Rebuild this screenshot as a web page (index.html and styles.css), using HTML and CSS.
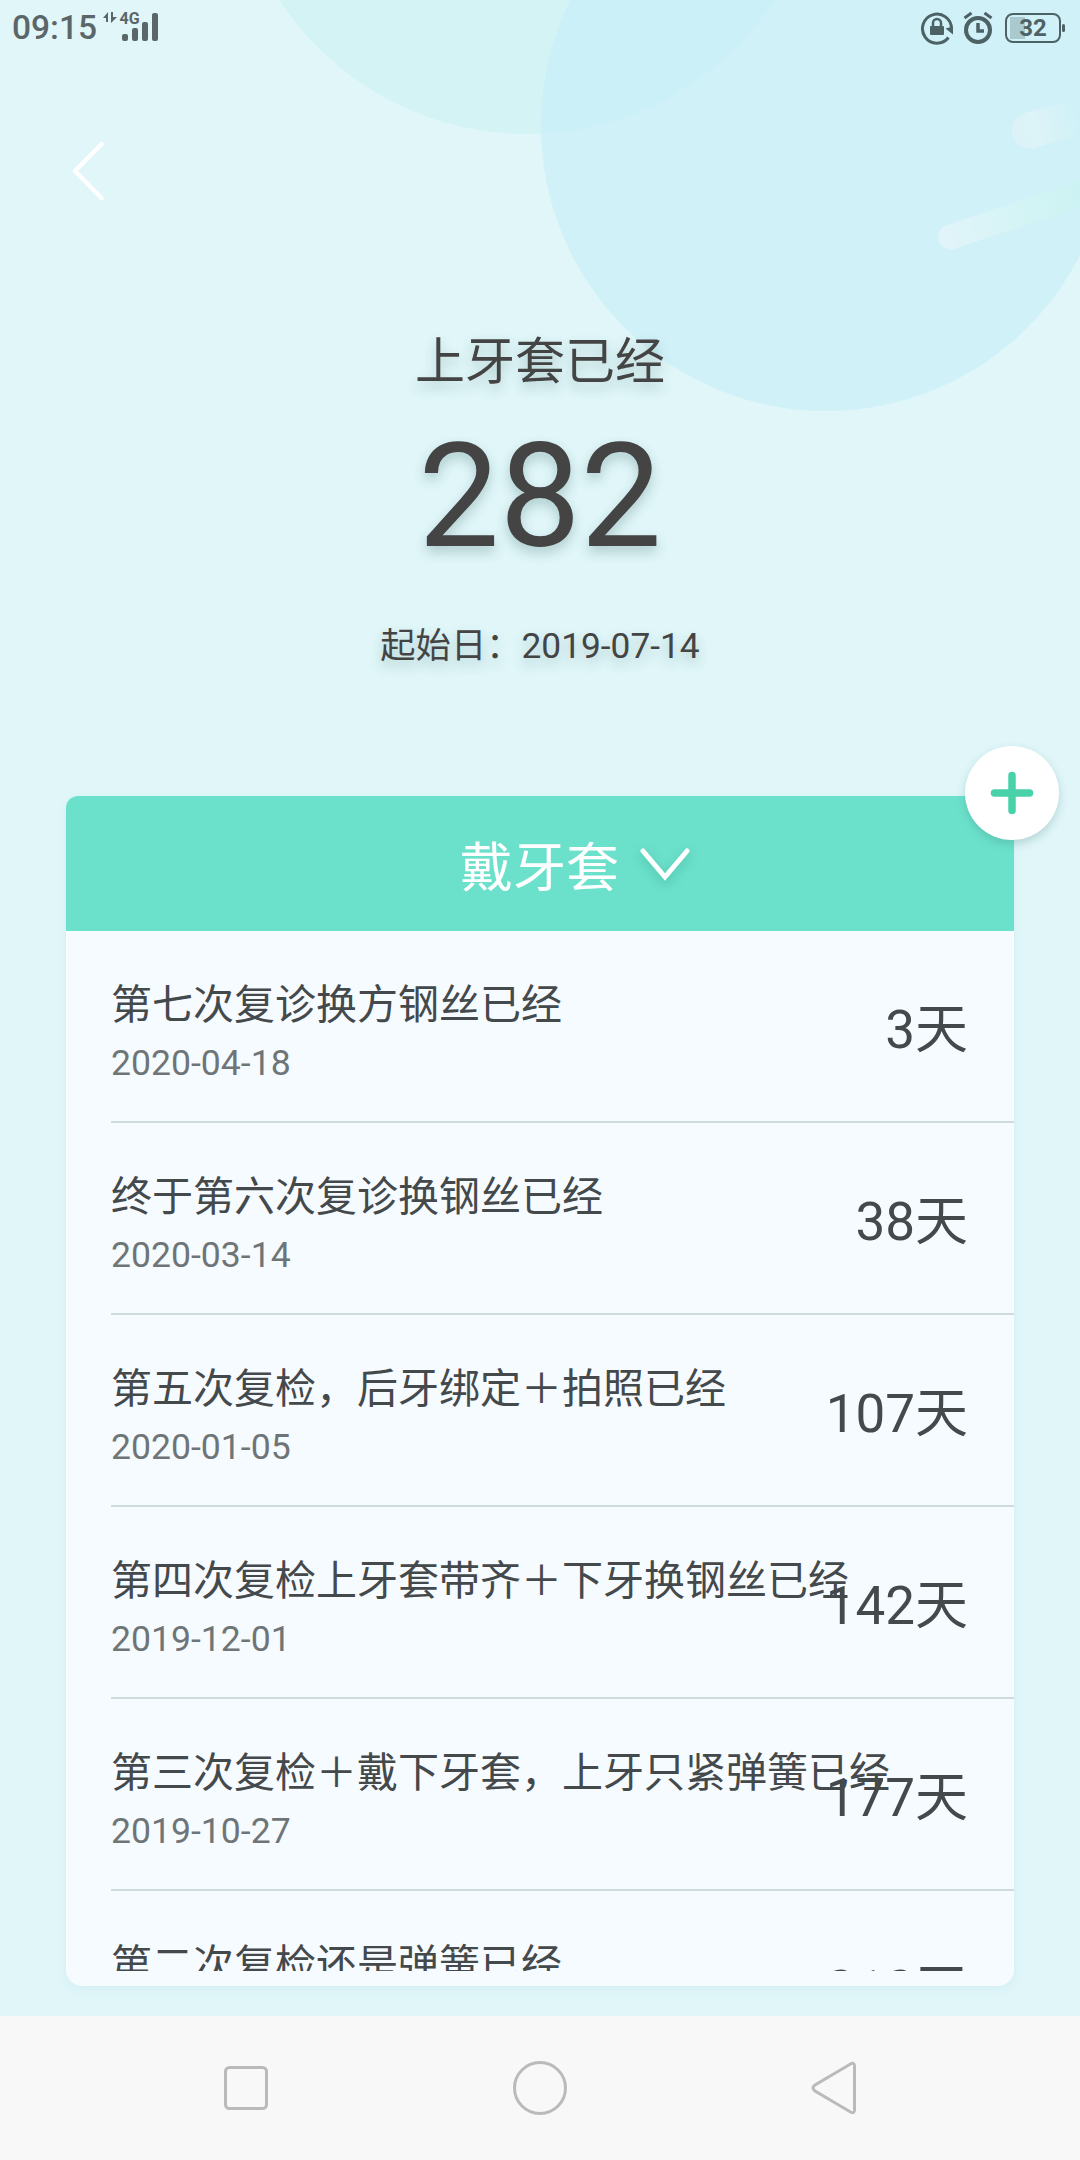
FILE: index.html
```html
<!DOCTYPE html>
<html lang="zh-CN">
<head>
    <meta charset="UTF-8">
    <meta name="viewport" content="width=device-width, initial-scale=1.0">
    <title>戴牙套</title>
    <link rel="stylesheet" href="styles.css">
</head>
<body>
    <svg class="backdrop" viewBox="0 0 1080 450">
        <defs>
            <linearGradient id="streak" x1="0" x2="1" y1="0" y2="0">
                <stop offset="0" stop-color="#e2f4fa"/>
                <stop offset="0.5" stop-color="#d3f4f4"/>
                <stop offset="1" stop-color="#c8f1f2"/>
            </linearGradient>
            <linearGradient id="streak-short" x1="0" x2="1" y1="0" y2="0">
                <stop offset="0" stop-color="#dcf2f8"/>
                <stop offset="0.4" stop-color="#dcf3f7"/>
                <stop offset="1" stop-color="#d0f2f7"/>
            </linearGradient>
        </defs>
        <circle cx="527" cy="-162" r="296" fill="#d4f3f5"/>
        <circle cx="826" cy="126" r="285" fill="#c4eef8" fill-opacity="0.56"/>
        <rect x="0" y="0" width="190" height="25" rx="12.5" fill="url(#streak)" transform="translate(935 229) rotate(-18.5)"/>
        <rect x="0" y="0" width="66" height="36" rx="17" fill="url(#streak-short)" transform="translate(1008 118) rotate(-16)"/>
    </svg>

    <header class="status-bar">
        <div class="status-left">
            <span class="clock">09:15</span>
            <svg class="signal" width="56" height="32" viewBox="0 0 56 32">
                <path d="M0 7l5-6v10h-2V7zM8 1h2v5h4l-6 6z" fill="#5b6668"/>
                <text class="network" x="16.500" y="13">4G</text>
                <rect x="19" y="23" width="6" height="7" rx="2" fill="#5b6668"/>
                <rect x="29" y="17" width="6" height="13" rx="2" fill="#5b6668"/>
                <rect x="39" y="11" width="6" height="19" rx="2" fill="#5b6668"/>
                <rect x="49" y="2" width="6" height="28" rx="2" fill="#5b6668"/>
            </svg>
        </div>
        <div class="status-right">
            <svg width="34" height="34" viewBox="0 0 34 34" fill="none" stroke="#4d6265" stroke-width="3">
                <path d="M28.500 26.500a14.500 14.500 0 1 1 3-9"/>
                <path d="M25.500 17.500l7.500-2v8z" fill="#4d6265" stroke="none"/>
                <rect x="10" y="15" width="14" height="9" rx="1" fill="#4d6265" stroke="none"/>
                <path d="M13 15v-3a4 4 0 0 1 8 0v3" stroke-width="2.500"/>
            </svg>
            <svg width="30" height="34" viewBox="0 0 30 34" fill="none" stroke="#4d6265" stroke-width="4">
                <circle cx="15" cy="19" r="12"/>
                <path d="M15 12v8h6" stroke-width="3.500"/>
                <path d="M1.500 7l7-5M28.500 7l-7-5" stroke-width="3"/>
            </svg>
            <div class="battery"><span>32</span></div>
        </div>
    </header>

    <nav class="top-nav">
        <svg width="34" height="60" viewBox="0 0 34 60">
            <path d="M30.500 3L4 30l26.500 27" fill="none" stroke="#fff" stroke-width="4.500" stroke-linecap="round" stroke-linejoin="round"/>
        </svg>
    </nav>

    <section class="summary">
        <h1 class="summary-title">上牙套已经</h1>
        <div class="summary-days">282</div>
        <div class="summary-start">起始日：2019-07-14</div>
    </section>

    <main class="card">
        <div class="card-header">
            <span>戴牙套</span>
            <svg class="chevron" width="50" height="34" viewBox="0 0 50 34">
                <path d="M3 3l22 26L47 3" fill="none" stroke="#fff" stroke-width="5" stroke-linecap="round"/>
            </svg>
        </div>
        <button class="add-button">
            <svg width="44" height="44" viewBox="0 0 44 44">
                <path d="M22 4.500v35M4.500 22h35" stroke="#49d2aa" stroke-width="7.500" stroke-linecap="round"/>
            </svg>
        </button>
        <ul class="event-list">
            <li class="event">
                <div class="event-info">
                    <div class="event-title">第七次复诊换方钢丝已经</div>
                    <div class="event-date">2020-04-18</div>
                </div>
                <div class="event-days">3天</div>
            </li>
            <li class="event">
                <div class="event-info">
                    <div class="event-title">终于第六次复诊换钢丝已经</div>
                    <div class="event-date">2020-03-14</div>
                </div>
                <div class="event-days">38天</div>
            </li>
            <li class="event">
                <div class="event-info">
                    <div class="event-title">第五次复检，后牙绑定＋拍照已经</div>
                    <div class="event-date">2020-01-05</div>
                </div>
                <div class="event-days">107天</div>
            </li>
            <li class="event">
                <div class="event-info">
                    <div class="event-title">第四次复检上牙套带齐＋下牙换钢丝已经</div>
                    <div class="event-date">2019-12-01</div>
                </div>
                <div class="event-days">142天</div>
            </li>
            <li class="event">
                <div class="event-info">
                    <div class="event-title">第三次复检＋戴下牙套，上牙只紧弹簧已经</div>
                    <div class="event-date">2019-10-27</div>
                </div>
                <div class="event-days">177天</div>
            </li>
            <li class="event">
                <div class="event-info">
                    <div class="event-title">第二次复检还是弹簧已经</div>
                </div>
                <div class="event-days">212天</div>
            </li>
        </ul>
    </main>

    <footer class="system-nav">
        <svg width="54" height="54" viewBox="0 0 54 54">
            <rect x="6.500" y="6.500" width="41" height="41" rx="4"/>
        </svg>
        <svg width="54" height="54" viewBox="0 0 54 54">
            <circle cx="27" cy="27" r="25.500"/>
        </svg>
        <svg width="54" height="54" viewBox="0 0 54 54">
            <path d="M43.500 3L8 24q-4 3 0 6l35.500 21q4 2 4-2v-44q0-4-4-2z"/>
        </svg>
    </footer>
</body>
</html>
```
FILE: styles.css
```css
* {
    margin: 0;
    padding: 0;
    box-sizing: border-box;
}

body {
    width: 1080px;
    height: 2160px;
    display: flex;
    flex-direction: column;
    position: relative;
    overflow: hidden;
    background: #e0f6f9;
    color: #444;
    font-family: Roboto, "Noto Sans CJK SC", sans-serif;
}

svg {
    display: block;
    flex: none;
}

.backdrop {
    position: absolute;
    top: 0;
    left: 0;
    width: 1080px;
    height: 450px;
    z-index: -1;
}

.status-bar {
    height: 56px;
    padding: 0 15px 0 12px;
    display: flex;
    justify-content: space-between;
    align-items: center;
}

.status-left,
.status-right {
    display: flex;
    align-items: center;
}

.status-left {
    gap: 6px;
}

.status-right {
    gap: 9px;
}

.clock {
    color: #5b6668;
    font-size: 33.5px;
    font-weight: 500;
    line-height: 56px;
}

.signal {
    margin-bottom: 2px;
}

.network {
    fill: #5b6668;
    font-size: 16px;
    font-weight: 700;
}

.battery {
    width: 56px;
    height: 30px;
    margin: 0 4px 0 3px;
    border: 2px solid #4d6265;
    border-radius: 8px;
    background: linear-gradient(#a9c9cf, #a9c9cf) 3px 2px / 15px 22px no-repeat;
    color: #4d6265;
    font-size: 24px;
    font-weight: 700;
    line-height: 27px;
    text-align: center;
    position: relative;
}

.battery::after {
    content: "";
    position: absolute;
    top: 9px;
    right: -6px;
    width: 3px;
    height: 8px;
    border-radius: 2px;
    background: #4d6265;
}

.top-nav {
    height: 230px;
    padding: 85px 0 0 71px;
}

.summary {
    height: 510px;
    padding-top: 39px;
    text-align: center;
    text-shadow: 0 6px 12px rgba(60, 110, 100, 0.3);
}

.summary-title {
    font-size: 50px;
    font-weight: 400;
    line-height: 74px;
}

.summary-days {
    margin-top: 13px;
    font-size: 144.5px;
    line-height: 170px;
}

.summary-start {
    margin-top: 38px;
    font-size: 35.3px;
    line-height: 52px;
}

.card {
    width: 948px;
    height: 1190px;
    margin: 0 66px 30px;
    padding-bottom: 15px;
    display: flex;
    flex-direction: column;
    position: relative;
    background: #f6fbff;
    border-radius: 16px;
    box-shadow: 0 3px 8px rgba(120, 200, 210, 0.12);
}

.card-header {
    flex: none;
    height: 135px;
    padding-left: 70px;
    display: flex;
    align-items: center;
    justify-content: center;
    gap: 21px;
    border-radius: 12px 12px 0 0;
    background: #6be1cb;
    color: #fff;
    font-size: 53px;
}

.chevron {
    margin-top: 3px;
    filter: drop-shadow(0 4px 6px rgba(30, 130, 110, 0.4));
}

.add-button {
    position: absolute;
    top: -50px;
    right: -45px;
    width: 94px;
    height: 94px;
    display: flex;
    align-items: center;
    justify-content: center;
    border: none;
    border-radius: 50%;
    background: #fff;
    box-shadow: 0 4px 8px rgba(50, 120, 110, 0.25);
}

.event-list {
    flex: 1;
    min-height: 0;
    overflow: hidden;
    list-style: none;
    color: #44494b;
}

.event {
    height: 192px;
    margin-left: 45px;
    padding-right: 46px;
    display: flex;
    border-bottom: 2px solid #cfdadd;
}

.event-info {
    flex: 1;
    min-width: 0;
    padding-top: 44px;
    white-space: nowrap;
}

.event-title {
    font-size: 41px;
    line-height: 60px;
}

.event-date {
    color: #6f7577;
    font-size: 35.6px;
    line-height: 56px;
}

.event-days {
    flex: none;
    padding-top: 60px;
    font-size: 53px;
    line-height: 78px;
}

.system-nav {
    flex: none;
    height: 144px;
    padding: 0 219px;
    display: flex;
    align-items: center;
    justify-content: space-between;
    background: #f8f8f8;
    fill: none;
    stroke: #bababa;
    stroke-width: 3px;
}
```
